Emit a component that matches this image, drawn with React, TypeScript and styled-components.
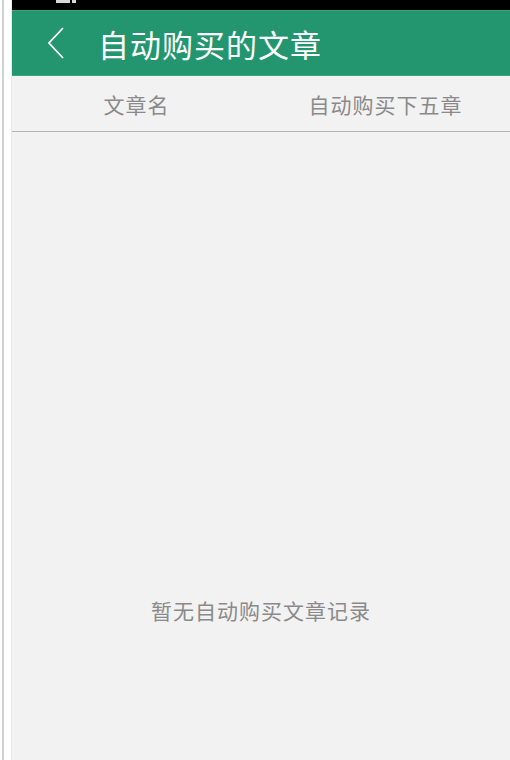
import * as React from 'react'
import styled, { createGlobalStyle } from 'styled-components'

const GlobalStyle = createGlobalStyle`
    html, body {
        margin: 0;
        padding: 0;
        background: #ffffff;
    }
    body {
        font-family: "Noto Sans CJK SC", "Noto Sans", Roboto, sans-serif;
    }
`

const Page = styled.div`
    display: flex;
    width: 510px;
    height: 760px;
    overflow: hidden;
`

const Gutter = styled.div`
    width: 11px;
    flex-shrink: 0;
    background: #ffffff;
    box-sizing: border-box;
    border-left: 2px solid #ffffff;
    &::after {
        content: '';
        display: block;
        width: 1.5px;
        height: 100%;
        background: #d2d2d2;
    }
`

const Screen = styled.div`
    flex: 1;
    display: flex;
    flex-direction: column;
    background: #f2f2f2;
    border-left: 1px solid #ebebeb;
`

const StatusBar = styled.div`
    height: 10px;
    background: #000;
    display: flex;
    align-items: flex-start;
    padding-left: 44px;
    gap: 2px;
`

const StatusBit = styled.span<{ $w: number }>`
    display: block;
    width: ${p => p.$w}px;
    height: 3px;
    background: #d8d8d8;
`

const Header = styled.div`
    height: 66px;
    box-sizing: border-box;
    background: #23966f;
    border-top: 1px solid #3aa582;
    border-bottom: 1px solid #3aa582;
    display: flex;
    align-items: center;
    color: #fff;
`

const BackButton = styled.button`
    background: none;
    border: none;
    padding: 0;
    margin-left: 34px;
    width: 20px;
    height: 34px;
    display: flex;
    align-items: center;
    justify-content: center;
    cursor: pointer;
`

const Title = styled.h1`
    margin: 0 0 0 32px;
    font-size: 31px;
    font-weight: 400;
    letter-spacing: 1px;
    line-height: 1;
`

const TableHead = styled.div`
    height: 55px;
    display: flex;
    border-bottom: 1.5px solid #b4b4b4;
`

const HeadCell = styled.div`
    flex: 1;
    display: flex;
    align-items: center;
    justify-content: center;
    font-size: 21px;
    color: #8a8a8a;
    letter-spacing: 1px;
`

const Empty = styled.div`
    flex: 1;
    display: flex;
    justify-content: center;
    padding-top: 463px;
    font-size: 21px;
    color: #8a8a8a;
    letter-spacing: 1px;
`

export default function App() {
    return (
        <>
            <GlobalStyle />
            <Page>
                <Gutter />
                <Screen>
                    <StatusBar>
                        <StatusBit $w={14} />
                        <StatusBit $w={4} />
                    </StatusBar>
                    <Header>
                        <BackButton aria-label='返回'>
                            <svg width='18' height='32' viewBox='0 0 18 32'>
                                <polyline points='16,1 2,16 16,31' fill='none' stroke='#fff' strokeWidth='1.8' />
                            </svg>
                        </BackButton>
                        <Title>自动购买的文章</Title>
                    </Header>
                    <TableHead>
                        <HeadCell>文章名</HeadCell>
                        <HeadCell>自动购买下五章</HeadCell>
                    </TableHead>
                    <Empty>暂无自动购买文章记录</Empty>
                </Screen>
            </Page>
        </>
    )
}
